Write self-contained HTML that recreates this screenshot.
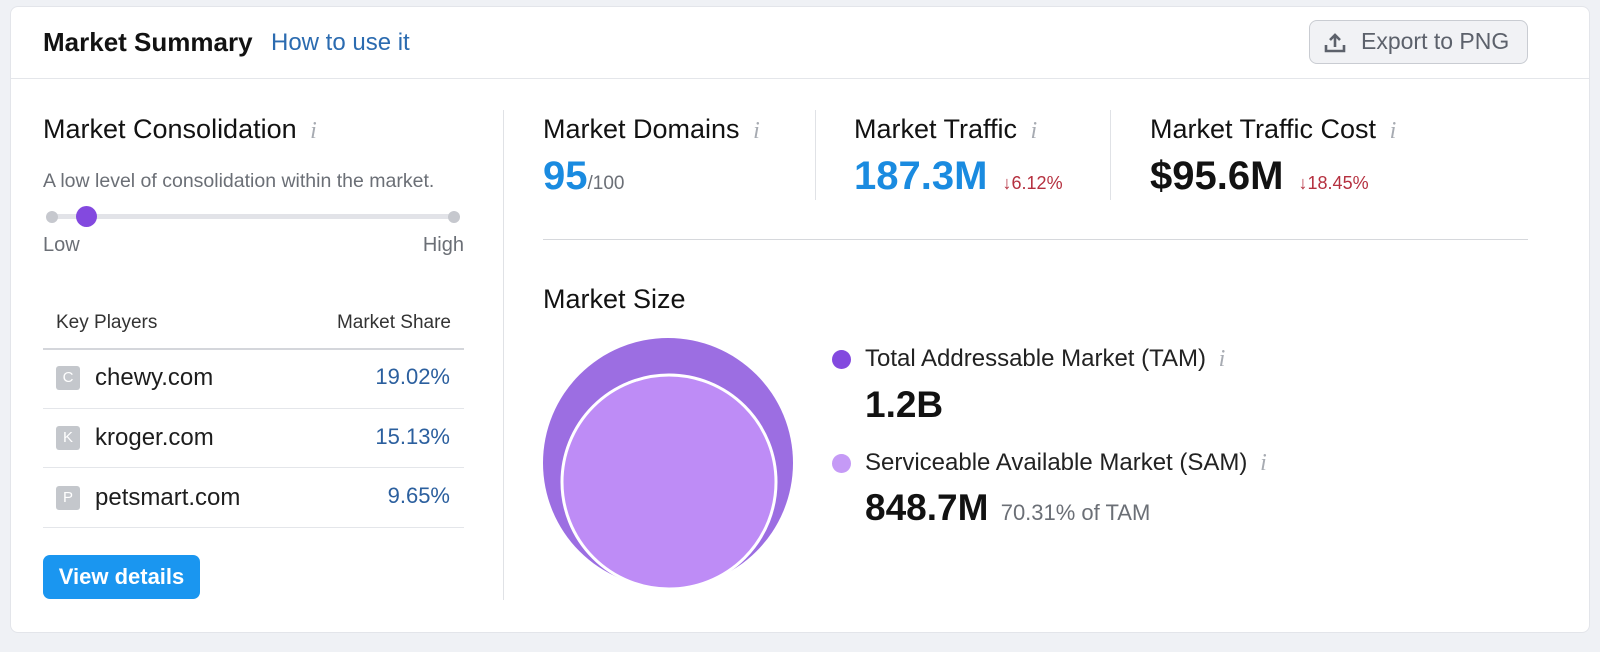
<!DOCTYPE html>
<html><head><meta charset="utf-8"><style>
*{margin:0;padding:0;box-sizing:border-box}
body{width:1600px;height:652px;background:#eff1f5;font-family:"Liberation Sans",Arial,sans-serif;color:#121212;position:relative;overflow:hidden}
.card{position:absolute;left:10px;top:6px;width:1580px;height:627px;background:#fff;border-radius:8px;border:1px solid #e3e5ea}
.a{position:absolute;white-space:nowrap}
.info{color:#a7abb2;font-style:italic;font-family:"Liberation Serif",serif;font-size:24px}
.hr{position:absolute;height:1px;background:#e4e6ea}
.fav{position:absolute;width:24px;height:24px;background:#c4c7cc;border-radius:3px;color:#fff;font-size:15px;text-align:center;line-height:24px}
.dom{font-size:24px;color:#1d1d1d}
.pct{font-size:22px;color:#2b5f9e}
</style></head><body>
<div class="card"></div>
<div class="a" style="left:43px;top:27px;font-size:26px;font-weight:bold">Market Summary</div>
<div class="a" style="left:271px;top:29px;font-size:24px;color:#2b6bb0">How to use it</div>
<div class="a" style="left:1309px;top:20px;width:219px;height:44px;border:1px solid #c9ccd2;border-radius:8px;background:#f1f2f5"></div>
<svg class="a" style="left:1322px;top:30px" width="26" height="26" viewBox="0 0 26 26"><path d="M13 17V5M8 10l5-5 5 5M4 15v6h18v-6" fill="none" stroke="#5c616b" stroke-width="2.6"/></svg>
<div class="a" style="left:1361px;top:28px;font-size:23px;color:#5c616b">Export to PNG</div>
<div class="hr" style="left:11px;top:78px;width:1578px"></div>

<div class="a" style="left:43px;top:114px;font-size:27px">Market Consolidation <span class="info">&nbsp;i</span></div>
<div class="a" style="left:43px;top:170px;font-size:19.5px;color:#6b6f76">A low level of consolidation within the market.</div>
<div class="a" style="left:52px;top:214px;width:402px;height:5px;background:#e2e3e8;border-radius:3px"></div>
<div class="a" style="left:46px;top:211px;width:12px;height:12px;border-radius:50%;background:#c6c8ce"></div>
<div class="a" style="left:448px;top:211px;width:12px;height:12px;border-radius:50%;background:#c6c8ce"></div>
<div class="a" style="left:76px;top:206px;width:21px;height:21px;border-radius:50%;background:#8349df"></div>
<div class="a" style="left:43px;top:234px;font-size:20px;color:#6b6f76">Low</div>
<div class="a" style="right:1136px;top:234px;font-size:20px;color:#6b6f76">High</div>

<div class="a" style="left:56px;top:312px;font-size:19px;color:#333">Key Players</div>
<div class="a" style="right:1149px;top:312px;font-size:19px;color:#333">Market Share</div>
<div class="hr" style="left:43px;top:348px;width:421px;height:2px;background:#d4d6db"></div>
<div class="fav" style="left:56px;top:366px">C</div><div class="a dom" style="left:95px;top:364px">chewy.com</div><div class="a pct" style="right:1150px;top:364px">19.02%</div>
<div class="hr" style="left:43px;top:408px;width:421px"></div>
<div class="fav" style="left:56px;top:426px">K</div><div class="a dom" style="left:95px;top:424px">kroger.com</div><div class="a pct" style="right:1150px;top:424px">15.13%</div>
<div class="hr" style="left:43px;top:467px;width:421px"></div>
<div class="fav" style="left:56px;top:486px">P</div><div class="a dom" style="left:95px;top:484px">petsmart.com</div><div class="a pct" style="right:1150px;top:483px">9.65%</div>
<div class="hr" style="left:43px;top:527px;width:421px"></div>
<div class="a" style="left:43px;top:555px;width:157px;height:44px;background:#1a96f0;border-radius:7px;color:#fff;font-weight:bold;font-size:22px;line-height:44px;text-align:center">View details</div>

<div class="a" style="left:503px;top:110px;width:1px;height:490px;background:#e0e2e6"></div>

<div class="a" style="left:543px;top:114px;font-size:27px">Market Domains <span class="info">&nbsp;i</span></div>
<div class="a" style="left:543px;top:154px;font-size:40px;font-weight:bold;color:#1a8be0">95<span style="font-size:19px;font-weight:normal;color:#6b6f76">/100</span></div>
<div class="a" style="left:815px;top:110px;width:1px;height:90px;background:#e0e2e6"></div>
<div class="a" style="left:854px;top:114px;font-size:27px">Market Traffic <span class="info">&nbsp;i</span></div>
<div class="a" style="left:854px;top:154px;font-size:40px;font-weight:bold;color:#1a8be0">187.3M <span style="font-size:18px;font-weight:normal;color:#b5303f;margin-left:4px">↓6.12%</span></div>
<div class="a" style="left:1110px;top:110px;width:1px;height:90px;background:#e0e2e6"></div>
<div class="a" style="left:1150px;top:114px;font-size:27px">Market Traffic Cost <span class="info">&nbsp;i</span></div>
<div class="a" style="left:1150px;top:154px;font-size:40px;font-weight:bold">$95.6M <span style="font-size:18px;font-weight:normal;color:#b5303f;margin-left:4px">↓18.45%</span></div>
<div class="hr" style="left:543px;top:239px;width:985px;background:#d6d8dc"></div>

<div class="a" style="left:543px;top:284px;font-size:27px">Market Size</div>
<svg class="a" style="left:540px;top:335px" width="260" height="265"><circle cx="128" cy="128" r="125" fill="#9c6ee2"/><circle cx="129" cy="147" r="107" fill="#be8cf6" stroke="#fff" stroke-width="3"/></svg>
<div class="a" style="left:832px;top:350px;width:19px;height:19px;border-radius:50%;background:#8349df"></div>
<div class="a" style="left:865px;top:345px;font-size:24px;color:#222">Total Addressable Market (TAM) <span class="info">&nbsp;i</span></div>
<div class="a" style="left:865px;top:384px;font-size:37px;font-weight:bold">1.2B</div>
<div class="a" style="left:832px;top:454px;width:19px;height:19px;border-radius:50%;background:#c59af6"></div>
<div class="a" style="left:865px;top:449px;font-size:24px;color:#222">Serviceable Available Market (SAM) <span class="info">&nbsp;i</span></div>
<div class="a" style="left:865px;top:487px;font-size:37px;font-weight:bold">848.7M <span style="font-size:22px;font-weight:normal;color:#6b6f76;margin-left:2px">70.31% of TAM</span></div>
</body></html>
